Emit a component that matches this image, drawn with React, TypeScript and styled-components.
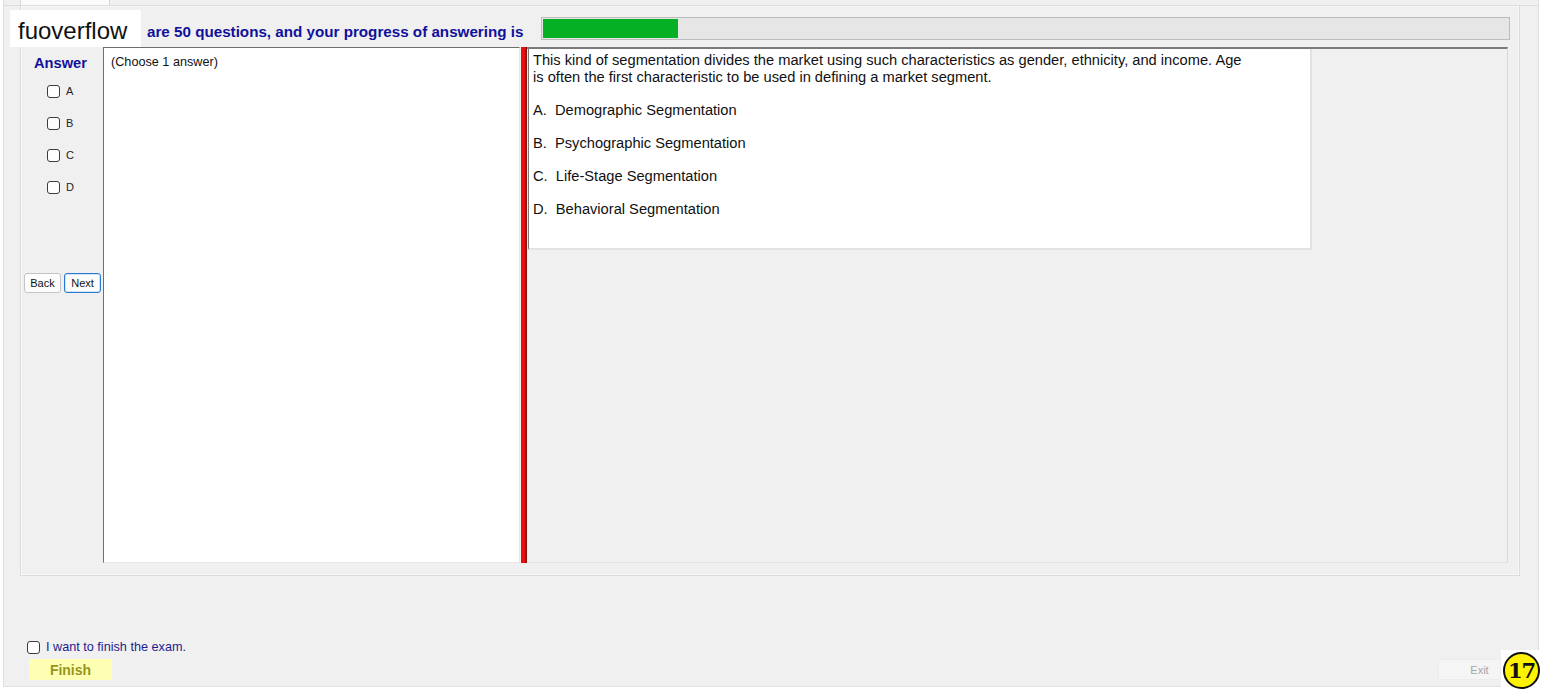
import React from 'react'
import styled, { createGlobalStyle } from 'styled-components'

const GlobalStyle = createGlobalStyle`
  html, body {
    margin: 0;
    padding: 0;
    background: #ffffff;
  }
  body {
    font-family: 'Liberation Sans', Arial, sans-serif;
  }
  * {
    box-sizing: border-box;
  }
`

const Screen = styled.div`
  position: relative;
  width: 1542px;
  height: 690px;
  overflow: hidden;
`

const Window = styled.div`
  display: flex;
  flex-direction: column;
  margin-left: 3px;
  width: 1536px;
  height: 687px;
  background: #f0f0f0;
  border-left: 1px solid #dedede;
  border-right: 1px solid #dedede;
  border-bottom: 1px solid #e2e2e2;
`

const TabStrip = styled.div`
  display: flex;
  height: 6px;
  padding-left: 16px;
  border-bottom: 1px solid #dcdcdc;
`

const Tab = styled.div`
  width: 90px;
  height: 6px;
  background: #fbfbfb;
  border-left: 1px solid #d6d6d6;
  border-right: 1px solid #d6d6d6;
`

const TabPage = styled.div`
  display: flex;
  flex-direction: column;
  margin-left: 16px;
  width: 1500px;
  height: 571px;
  margin-top: -1px;
  border: 1px solid #dcdcdc;
  box-shadow: inset 0 0 0 1px #f8f8f8;
  padding: 11px 9px 0 3px;
`

const Header = styled.div`
  display: flex;
  align-items: flex-start;
  height: 23px;
  padding-left: 123px;
`

const Title = styled.span`
  margin-top: 7px;
  font-size: 15.2px;
  line-height: 15px;
  font-weight: bold;
  color: #10109c;
  white-space: nowrap;
`

const Progress = styled.div`
  margin-left: auto;
  width: 969px;
  height: 23px;
  background: #e6e6e6;
  border: 1px solid #bcbcbc;
  padding: 1px;
`

const ProgressFill = styled.div`
  height: 100%;
  background: #06b025;
`

const Body = styled.div`
  display: flex;
  margin-top: 7px;
  height: 516px;
  width: 1484px;
`

const LeftCol = styled.div`
  display: flex;
  flex-direction: column;
  width: 79px;
  padding-top: 8px;
`

const AnswerLabel = styled.div`
  margin-left: 10px;
  font-size: 14.67px;
  line-height: 17px;
  font-weight: bold;
  color: #10109c;
`

const Options = styled.div`
  display: flex;
  flex-direction: column;
  margin-top: 3px;
  padding-left: 23px;
`

const OptionRow = styled.label`
  display: flex;
  align-items: center;
  height: 32px;
  gap: 6px;
  font-size: 11px;
  color: #222;
`

const Box = styled.span`
  display: inline-block;
  width: 13px;
  height: 13px;
  background: #ffffff;
  border: 1px solid #3c3c3c;
  border-radius: 3px;
`

const NavRow = styled.div`
  display: flex;
  gap: 3px;
  margin-top: 70px;
`

const NavButton = styled.button<{ $focused?: boolean }>`
  width: 37px;
  height: 20px;
  padding: 0;
  font-family: 'Liberation Sans', Arial, sans-serif;
  font-size: 11px;
  color: #111;
  background: #fdfdfd;
  border: 1px solid ${p => (p.$focused ? '#2a7bd0' : '#c4c4c4')};
  border-radius: 3px;
  box-shadow: ${p => (p.$focused ? 'inset 0 0 0 1px #cfe3f7' : 'none')};
`

const AnswerBox = styled.div`
  width: 417px;
  height: 516px;
  background: #ffffff;
  border-top: 1px solid #6e6e6e;
  border-left: 1px solid #6e6e6e;
  border-right: 1px solid #e6e6e6;
  border-bottom: 1px solid #e6e6e6;
  padding: 7px 7px;
  font-size: 12.67px;
  color: #111;
`

const Splitter = styled.div`
  width: 7px;
  height: 516px;
  background: linear-gradient(
    to right,
    #f4f4f4 0,
    #f4f4f4 1px,
    #c81010 1px,
    #f01010 2px,
    #e80c0c 5px,
    #8a1010 6px,
    #8a1010 7px
  );
`

const RightPane = styled.div`
  flex: 1;
  height: 516px;
  border-top: 2px solid #7a7a7a;
  border-right: 1px solid #d8d8d8;
  border-bottom: 1px solid #e4e4e4;
  padding-left: 1px;
`

const QuestionBox = styled.div`
  width: 784px;
  height: 201px;
  background: #ffffff;
  border-left: 1px solid #7a7a7a;
  border-right: 2px solid #e2e2e2;
  border-bottom: 2px solid #e2e2e2;
  padding: 3px 4px;
  font-size: 14.67px;
  line-height: 16.5px;
  color: #111;
`

const Para = styled.div<{ $gap?: boolean }>`
  white-space: pre;
  margin-top: ${p => (p.$gap ? '16.5px' : '0')};
`

const Footer = styled.div`
  display: flex;
  flex-direction: column;
  margin-top: 64px;
  padding: 0 37px 0 23px;
`

const FinishCheck = styled.label`
  display: flex;
  align-items: center;
  gap: 6px;
  height: 14px;
  font-size: 12.67px;
  color: #1c1c8e;
`

const ButtonRow = styled.div`
  display: flex;
  justify-content: space-between;
  margin-top: 5px;
  padding-left: 2px;
`

const FinishButton = styled.button`
  width: 83px;
  height: 21px;
  padding: 0;
  border: none;
  background: #ffffb4;
  font-family: 'Liberation Sans', Arial, sans-serif;
  font-size: 14px;
  font-weight: bold;
  color: #97951c;
`

const ExitButton = styled.button`
  width: 63px;
  height: 21px;
  padding: 0 0 0 20px;
  border: 1px solid #ececec;
  background: #f5f5f5;
  font-family: 'Liberation Sans', Arial, sans-serif;
  font-size: 11px;
  color: #a4a4a4;
`

const Watermark = styled.div`
  position: absolute;
  left: 10px;
  top: 10px;
  width: 131px;
  height: 37px;
  background: #ffffff;
  padding: 7px 0 0 8px;
  font-size: 24px;
  line-height: 28px;
  color: #111;
`

const Badge = styled.div`
  position: absolute;
  left: 1501px;
  top: 650px;
  width: 41px;
  height: 40px;
  background: #ffffff;
  display: flex;
  align-items: center;
  justify-content: center;
`

const BadgeCircle = styled.div`
  width: 37px;
  height: 37px;
  border-radius: 50%;
  background: #fff200;
  border: 2px solid #111;
  display: flex;
  align-items: center;
  justify-content: center;
  font-family: 'DejaVu Serif', 'Liberation Serif', serif;
  font-weight: bold;
  font-size: 21px;
  letter-spacing: -1px;
  color: #111;
`

const options = ['A', 'B', 'C', 'D']

const question = [
  'This kind of segmentation divides the market using such characteristics as gender, ethnicity, and income. Age',
  'is often the first characteristic to be used in defining a market segment.',
]

const choices = [
  'A.  Demographic Segmentation',
  'B.  Psychographic Segmentation',
  'C.  Life-Stage Segmentation',
  'D.  Behavioral Segmentation',
]

export default function App() {
  const answered = 7
  const total = 50

  return (
    <Screen>
      <GlobalStyle />
      <Window>
        <TabStrip>
          <Tab />
        </TabStrip>
        <TabPage>
          <Header>
            <Title>are 50 questions, and your progress of answering is</Title>
            <Progress>
              <ProgressFill style={{ width: `${(answered / total) * 100}%` }} />
            </Progress>
          </Header>
          <Body>
            <LeftCol>
              <AnswerLabel>Answer</AnswerLabel>
              <Options>
                {options.map(o => (
                  <OptionRow key={o}>
                    <Box />
                    {o}
                  </OptionRow>
                ))}
              </Options>
              <NavRow>
                <NavButton>Back</NavButton>
                <NavButton $focused>Next</NavButton>
              </NavRow>
            </LeftCol>
            <AnswerBox>(Choose 1 answer)</AnswerBox>
            <Splitter />
            <RightPane>
              <QuestionBox>
                {question.map(line => (
                  <Para key={line}>{line}</Para>
                ))}
                {choices.map(c => (
                  <Para key={c} $gap>
                    {c}
                  </Para>
                ))}
              </QuestionBox>
            </RightPane>
          </Body>
        </TabPage>
        <Footer>
          <FinishCheck>
            <Box />
            I want to finish the exam.
          </FinishCheck>
          <ButtonRow>
            <FinishButton>Finish</FinishButton>
            <ExitButton>Exit</ExitButton>
          </ButtonRow>
        </Footer>
      </Window>
      <Watermark>fuoverflow</Watermark>
      <Badge>
        <BadgeCircle>17</BadgeCircle>
      </Badge>
    </Screen>
  )
}
